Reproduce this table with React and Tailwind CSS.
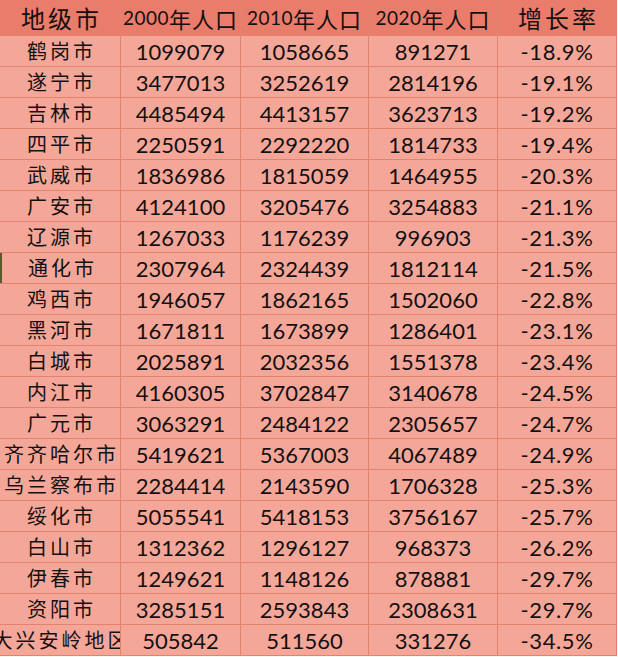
import React from "react";

const rows = [
  ["鹤岗市", "1099079", "1058665", "891271", "-18.9%"],
  ["遂宁市", "3477013", "3252619", "2814196", "-19.1%"],
  ["吉林市", "4485494", "4413157", "3623713", "-19.2%"],
  ["四平市", "2250591", "2292220", "1814733", "-19.4%"],
  ["武威市", "1836986", "1815059", "1464955", "-20.3%"],
  ["广安市", "4124100", "3205476", "3254883", "-21.1%"],
  ["辽源市", "1267033", "1176239", "996903", "-21.3%"],
  ["通化市", "2307964", "2324439", "1812114", "-21.5%"],
  ["鸡西市", "1946057", "1862165", "1502060", "-22.8%"],
  ["黑河市", "1671811", "1673899", "1286401", "-23.1%"],
  ["白城市", "2025891", "2032356", "1551378", "-23.4%"],
  ["内江市", "4160305", "3702847", "3140678", "-24.5%"],
  ["广元市", "3063291", "2484122", "2305657", "-24.7%"],
  ["齐齐哈尔市", "5419621", "5367003", "4067489", "-24.9%"],
  ["乌兰察布市", "2284414", "2143590", "1706328", "-25.3%"],
  ["绥化市", "5055541", "5418153", "3756167", "-25.7%"],
  ["白山市", "1312362", "1296127", "968373", "-26.2%"],
  ["伊春市", "1249621", "1148126", "878881", "-29.7%"],
  ["资阳市", "3285151", "2593843", "2308631", "-29.7%"],
  ["大兴安岭地区", "505842", "511560", "331276", "-34.5%"],
];

function HeadPop({ year }) {
  return (
    <div className="flex items-center justify-center overflow-hidden whitespace-nowrap bg-[#ea7c6b] text-[#141010]">
      <span className="font-['Lato',sans-serif] text-[19px] tracking-[0.5px] leading-none">{year}</span>
      <span className="font-['Noto_Sans_CJK_SC',sans-serif] text-[22px] leading-none tracking-[1px]">年人口</span>
    </div>
  );
}

export default function App() {
  return (
    <div className="w-[618px] h-[657px] bg-[#fbf9ec] overflow-hidden">
      <div className="grid grid-cols-[120px_119px_127px_128px_118px] grid-rows-[35px_repeat(20,30px)] gap-px bg-[#e5816f] border-r border-b border-[#e5816f] w-[617px]">
        <div className="flex items-center justify-center bg-[#ea7c6b] text-[#141010] text-[24px] tracking-[3px] pl-[3px] leading-none font-['Noto_Sans_CJK_SC',sans-serif]">地级市</div>
        <HeadPop year="2000" />
        <HeadPop year="2010" />
        <HeadPop year="2020" />
        <div className="flex items-center justify-center bg-[#ea7c6b] text-[#141010] text-[24px] tracking-[3px] pl-[3px] leading-none font-['Noto_Sans_CJK_SC',sans-serif]">增长率</div>
        {rows.map((r, i) => (
          <React.Fragment key={i}>
            <div
              className={
                i === 7
                  ? "flex items-center justify-center overflow-hidden whitespace-nowrap bg-[#f4a799] text-[#141010] text-[20px] tracking-[3px] pl-[3px] leading-none font-['Noto_Sans_CJK_SC',sans-serif] border-l-2 border-[#5b5a2a]"
                  : "flex items-center justify-center overflow-hidden whitespace-nowrap bg-[#f4a799] text-[#141010] text-[20px] tracking-[3px] pl-[3px] leading-none font-['Noto_Sans_CJK_SC',sans-serif]"
              }
            >
              {r[0]}
            </div>
            {r.slice(1).map((c, j) => (
              <div
                key={j}
                className={
                  j === 3
                    ? "flex items-center justify-center pt-[2px] bg-[#f4a799] text-[#141010] text-[22px] tracking-[0.6px] leading-none font-['Lato',sans-serif]"
                    : "flex items-center justify-center pt-[2px] bg-[#f4a799] text-[#141010] text-[22px] leading-none font-['Lato',sans-serif]"
                }
              >
                {c}
              </div>
            ))}
          </React.Fragment>
        ))}
      </div>
    </div>
  );
}
